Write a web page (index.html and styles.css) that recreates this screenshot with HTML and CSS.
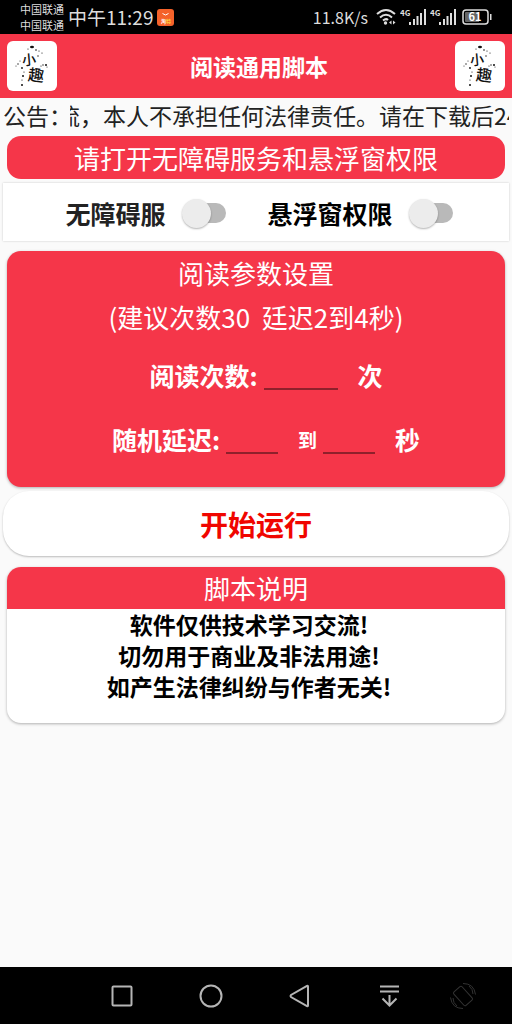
FILE: index.html
```
<!DOCTYPE html>
<html lang="zh-CN">
<head>
    <meta charset="UTF-8">
    <meta name="viewport" content="width=device-width, initial-scale=1.0">
    <title>阅读通用脚本</title>
    <link rel="stylesheet" href="styles.css">
</head>
<body>
    <!-- shared logo -->
    <svg class="defs" width="0" height="0" aria-hidden="true">
        <symbol id="logo" viewBox="0 0 50 50">
            <g fill="#111">
                <text class="logo-text" x="15" y="24" font-size="14" transform="rotate(-5 22 18)">小</text>
                <text class="logo-text" x="21" y="40" font-size="16" transform="rotate(6 29 34)">趣</text>
                <ellipse cx="25" cy="6" rx="2" ry="1.2"/>
                <circle cx="21" cy="8" r=".6"/><circle cx="29" cy="9" r=".8"/><circle cx="32" cy="10" r=".6"/>
                <circle cx="35" cy="12" r=".6"/><circle cx="31" cy="15" r=".7"/><circle cx="36" cy="24" r=".7"/>
                <circle cx="39" cy="24" r="1"/><circle cx="34" cy="25" r=".6"/><circle cx="40" cy="26" r=".5"/>
                <circle cx="11" cy="23" r=".7"/><circle cx="9" cy="25" r=".5"/><circle cx="15" cy="27" r=".9"/>
                <circle cx="17" cy="31" r=".6"/><circle cx="16" cy="35" r="1"/><circle cx="15" cy="39" r=".6"/>
                <circle cx="15" cy="44" r="1"/><circle cx="13" cy="20" r=".5"/>
            </g>
        </symbol>
    </svg>

    <div class="status-bar">
        <div class="carriers"><span>中国联通</span><span>中国联通</span></div>
        <span class="clock">中午11:29</span>
        <span class="app-badge">
            <svg width="17" height="17" viewBox="0 0 17 17">
                <rect width="17" height="17" rx="3" fill="#f4622a"/>
                <path d="M5.500 4.500q3 3 6 0" fill="none" stroke="#fff" stroke-width="1"/>
                <text x="4" y="14" font-size="5" class="badge-text" fill="#fff">淘<tspan fill="#ffd23c">特</tspan></text>
            </svg>
        </span>
        <span class="speed">11.8K/s</span>
        <svg class="wifi" width="20" height="18" viewBox="0 0 20 18" fill="none" stroke="#ddd" stroke-width="2">
            <path d="M1 6Q10-2 19 6M4 9.500q6-5.500 12 0M7 12.500q3-2.500 5 -.5"/>
            <circle cx="9.500" cy="15" r="1.700" fill="#ddd" stroke="none"/>
            <path d="M13 14.500l2.500-2v4zM19.500 14.500l-2.500-2v4z" fill="#ddd" stroke="none"/>
        </svg>
        <svg class="signal" width="26" height="18" viewBox="0 0 26 18" fill="#ddd">
            <text x="0" y="8" font-size="8" class="net-text">4G</text>
            <path d="M9 14h2v3H9zM13 11h2v6h-2zM16.500 8h2v9h-2zM20 5h2v12h-2zM24 1h2v16h-2z"/>
        </svg>
        <svg class="signal" width="26" height="18" viewBox="0 0 26 18" fill="#ddd">
            <text x="0" y="8" font-size="8" class="net-text">4G</text>
            <path d="M9 14h2v3H9zM13 11h2v6h-2zM16.500 8h2v9h-2zM20 5h2v12h-2zM24 1h2v16h-2z"/>
        </svg>
        <svg class="battery" width="30" height="16" viewBox="0 0 30 16">
            <rect x="1" y="1" width="25" height="14" rx="3" fill="none" stroke="#ddd" stroke-width="1.500"/>
            <path d="M4 3h13v10H4q-1 0-1-1V4q0-1 1-1z" fill="#666"/>
            <path d="M28 5h1.500v6H28z" fill="#ddd"/>
            <text x="13" y="12" font-size="11" text-anchor="middle" class="net-text" fill="#fff">61</text>
        </svg>
    </div>

    <header class="app-bar">
        <svg class="logo"><use href="#logo"/></svg>
        <h1>阅读通用脚本</h1>
        <svg class="logo"><use href="#logo"/></svg>
    </header>

    <div class="notice">
        <span>公告：</span>
        <div class="marquee">流，本人不承担任何法律责任。请在下载后24小时内删除</div>
    </div>

    <main class="content">
        <h2 class="banner">请打开无障碍服务和悬浮窗权限</h2>

        <div class="permissions">
            <label class="service">无障碍服 <input type="checkbox" class="switch"></label>
            <label class="overlay">悬浮窗权限 <input type="checkbox" class="switch"></label>
        </div>

        <form class="settings" id="settingsForm">
            <h2>阅读参数设置</h2>
            <p class="hint">(建议次数30  廷迟2到4秒)</p>
            <div class="field">
                <label for="read-count">阅读次数:</label>
                <input type="text" id="read-count" class="wide">
                <span class="unit">次</span>
            </div>
            <div class="field">
                <label for="delay-min">随机延迟:</label>
                <input type="text" id="delay-min">
                <label for="delay-max" class="to">到</label>
                <input type="text" id="delay-max">
                <span class="unit">秒</span>
            </div>
        </form>

        <button type="submit" form="settingsForm" class="run">开始运行</button>

        <section class="about">
            <h2>脚本说明</h2>
            <p>软件仅供技术学习交流!</p>
            <p>切勿用于商业及非法用途!</p>
            <p>如产生法律纠纷与作者无关!</p>
        </section>
    </main>

    <nav class="nav-bar">
        <button type="button" aria-label="最近任务">
            <svg width="28" height="28" viewBox="0 0 28 28"><rect x="4.500" y="4.500" width="19" height="19" rx="1"/></svg>
        </button>
        <button type="button" aria-label="主页">
            <svg width="28" height="28" viewBox="0 0 28 28"><circle cx="14" cy="14" r="10.500"/></svg>
        </button>
        <button type="button" aria-label="返回">
            <svg width="28" height="28" viewBox="0 0 28 28"><path d="M22 4.500v19q0 1-1 .5L5 15q-1-1 0-2L21 4q1-.5 1 .5z"/></svg>
        </button>
        <button type="button" aria-label="通知栏">
            <svg width="28" height="28" viewBox="0 0 28 28"><path d="M5 4.500h19M5 9.500h19M14.500 13v10.500M7.500 16.500l7 7 7-7"/></svg>
        </button>
        <button type="button" aria-label="旋转" class="dim">
            <svg width="28" height="28" viewBox="0 0 28 28"><rect x="8.500" y="5" width="11" height="18" rx="1.500" transform="rotate(-42 14 14)"/><path d="M14 1.500q11 0 12.500 11M20 4q4 3 4 8M14 26.500q-11 0-12.500-11M8 24q-4-3-4-8"/></svg>
        </button>
    </nav>
</body>
</html>
```
FILE: styles.css
```
* { box-sizing: border-box; }
body { font-family: "Noto Sans CJK SC", "Noto Sans", sans-serif; margin: 0; min-height: 100vh; display: flex; flex-direction: column; background-color: #fafafa; color: #222; }
h1, h2, p { margin: 0; font-weight: normal; }
svg { display: block; flex: none; }
button { font-family: inherit; border: none; cursor: pointer; }
.defs { position: absolute; }

/* status bar */
.status-bar { display: flex; align-items: center; height: 34px; padding: 0 20px; background-color: #000; color: #ddd; }
.carriers { display: flex; flex-direction: column; font-size: 11px; line-height: 16px; }
.clock { margin-left: 4px; font-size: 19px; line-height: 34px; }
.app-badge { margin-left: 4px; }
.badge-text, .net-text { font-weight: bold; }
.speed { margin-left: auto; font-size: 16px; }
.wifi { margin-left: 8px; }
.signal { margin-left: 4px; }
.battery { margin-left: 6px; }

/* title bar */
.app-bar { display: flex; align-items: center; justify-content: space-between; height: 64px; padding: 0 7px; background-color: #f53649; }
.app-bar h1 { padding-left: 6px; font-size: 23px; font-weight: bold; color: #fff; }
.logo { width: 50px; height: 50px; border-radius: 6px; background-color: #fff; }
.logo-text { font-weight: 500; }

.notice { display: flex; height: 34px; padding: 0 3px; font-size: 23px; line-height: 34px; white-space: nowrap; }
.notice span { flex: none; width: 67px; }
.marquee { flex: 1; overflow: hidden; text-indent: -13px; }

/* cards */
.content { display: flex; flex-direction: column; padding: 4px 3px 16px; }
.banner, .settings, .about { margin: 0 4px; border-radius: 14px; font-size: 26px; color: #fff; text-align: center; }
.banner { background-color: #f53649; line-height: 43px; }

.permissions { display: flex; justify-content: center; gap: 40px; height: 58px; margin: 4px 0 10px; padding: 2px 0 0 8px; background-color: #fff; box-shadow: 0 0 2px rgba(0,0,0,0.2); font-size: 25px; font-weight: bold; }
.permissions label { display: flex; align-items: center; gap: 12px; }
.overlay { color: #000; }
.switch { appearance: none; position: relative; width: 50px; height: 32px; margin: 0; }
.switch::before { content: ""; position: absolute; left: 12px; top: 6px; width: 36px; height: 20px; border-radius: 10px; background-color: #b9b9b9; }
.switch::after { content: ""; position: absolute; left: 4px; top: 2px; width: 29px; height: 29px; border-radius: 50%; background-color: #ececec; box-shadow: 0 1px 2px rgba(0,0,0,0.3); }
.switch:checked::after { left: 22px; }

.settings { padding-bottom: 16px; background-color: #f53649; box-shadow: 0 1px 3px rgba(0,0,0,0.3); }
.settings h2 { font-size: 26px; line-height: 44px; }
.hint { line-height: 44px; white-space: pre; }
.field { display: flex; align-items: center; justify-content: center; height: 64px; margin-top: 4px; padding-left: 20px; font-size: 25px; font-weight: bold; }
.field + .field { margin-top: 0; }
.field input { width: 52px; height: 30px; margin: 0 0 0 6px; padding: 0; border: none; border-bottom: 2px solid #8f202b; background: none; color: #fff; font-size: 23px; text-align: center; }
.field .wide { width: 74px; }
.unit, .to { margin-left: 20px; }
.to { font-size: 19px; }

.run { height: 65px; margin: 4px 0 11px; border-radius: 26px; background-color: #fff; box-shadow: 0 1px 2px rgba(0,0,0,0.25); font-size: 28px; font-weight: bold; color: #f00600; }

.about { overflow: hidden; padding-bottom: 21px; background-color: #fff; box-shadow: 0 1px 3px rgba(0,0,0,0.3); }
.about h2 { background-color: #f53649; font-size: 26px; line-height: 42px; }
.about p { padding-right: 14px; font-size: 23px; font-weight: bold; line-height: 31px; color: #000; }

/* navigation keys */
.nav-bar { display: grid; grid-template-columns: 89fr 89fr 89fr 89fr 60fr; align-items: center; height: 57px; margin-top: auto; padding: 0 19px 0 77px; background-color: #000; }
.nav-bar button { display: flex; justify-content: center; padding: 0; background: none; }
.nav-bar svg { fill: none; stroke: #b5b5b5; stroke-width: 2; }
.nav-bar .dim svg { stroke: #333; stroke-width: 1; }
```
